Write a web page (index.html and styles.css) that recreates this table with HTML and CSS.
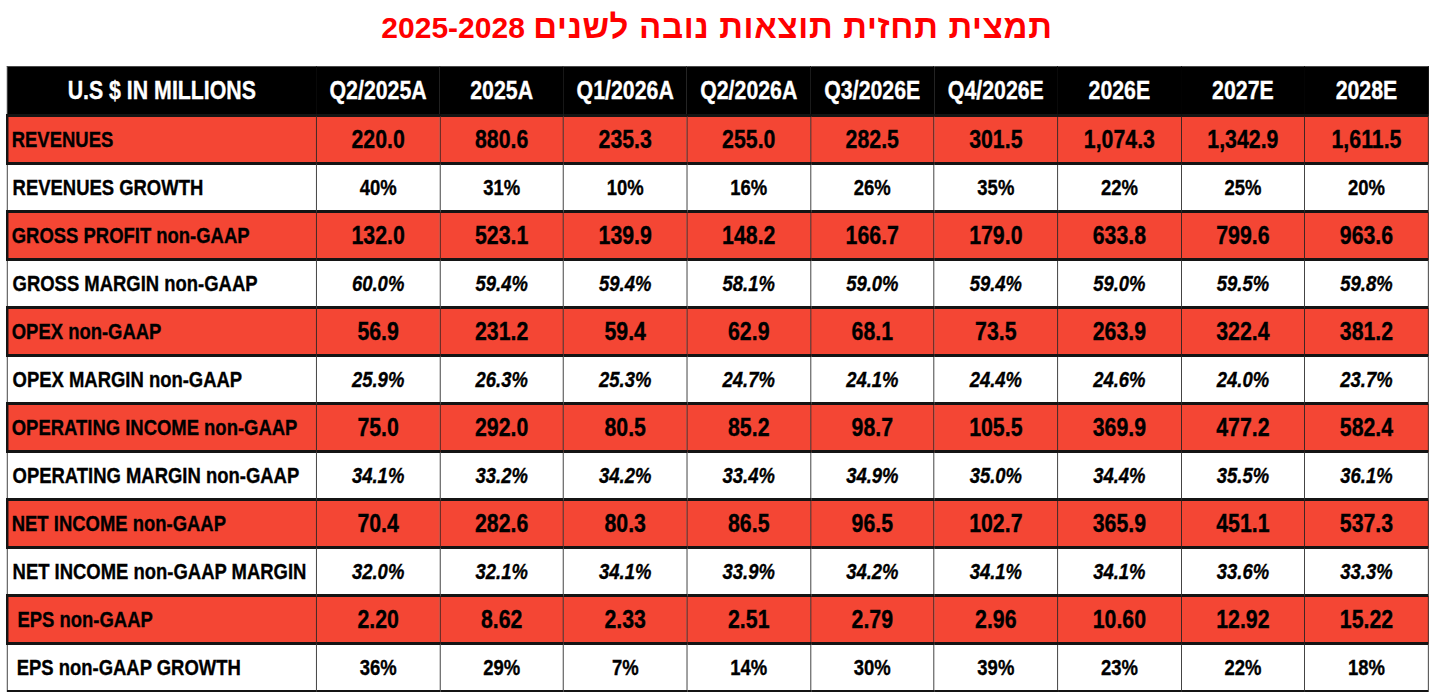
FILE: index.html
```html
<!DOCTYPE html>
<html lang="he">
<head>
<meta charset="utf-8">
<title>תמצית תחזית תוצאות נובה</title>
<link rel="stylesheet" href="styles.css">
</head>
<body>
<h1 class="title" dir="rtl"><span class="he">תמצית תחזית תוצאות נובה לשנים</span> 2025-2028</h1>
<div class="wrap">
<table class="fc">
  <colgroup>
    <col class="c-label">
    <col span="9" class="c-val">
  </colgroup>
  <thead>
    <tr>
      <th class="lbl-h">U.S $ IN MILLIONS</th>
      <th>Q2/2025A</th><th>2025A</th><th>Q1/2026A</th><th>Q2/2026A</th><th>Q3/2026E</th><th>Q4/2026E</th><th>2026E</th><th>2027E</th><th>2028E</th>
    </tr>
  </thead>
  <tbody>
    <tr class="red">
      <td class="lbl">REVENUES</td>
      <td>220.0</td><td>880.6</td><td>235.3</td><td>255.0</td><td>282.5</td><td>301.5</td><td>1,074.3</td><td>1,342.9</td><td>1,611.5</td>
    </tr>
    <tr class="white">
      <td class="lbl">REVENUES GROWTH</td>
      <td>40%</td><td>31%</td><td>10%</td><td>16%</td><td>26%</td><td>35%</td><td>22%</td><td>25%</td><td>20%</td>
    </tr>
    <tr class="red">
      <td class="lbl">GROSS PROFIT non-GAAP</td>
      <td>132.0</td><td>523.1</td><td>139.9</td><td>148.2</td><td>166.7</td><td>179.0</td><td>633.8</td><td>799.6</td><td>963.6</td>
    </tr>
    <tr class="white it">
      <td class="lbl">GROSS MARGIN non-GAAP</td>
      <td>60.0%</td><td>59.4%</td><td>59.4%</td><td>58.1%</td><td>59.0%</td><td>59.4%</td><td>59.0%</td><td>59.5%</td><td>59.8%</td>
    </tr>
    <tr class="red">
      <td class="lbl">OPEX non-GAAP</td>
      <td>56.9</td><td>231.2</td><td>59.4</td><td>62.9</td><td>68.1</td><td>73.5</td><td>263.9</td><td>322.4</td><td>381.2</td>
    </tr>
    <tr class="white it">
      <td class="lbl">OPEX MARGIN non-GAAP</td>
      <td>25.9%</td><td>26.3%</td><td>25.3%</td><td>24.7%</td><td>24.1%</td><td>24.4%</td><td>24.6%</td><td>24.0%</td><td>23.7%</td>
    </tr>
    <tr class="red">
      <td class="lbl">OPERATING INCOME non-GAAP</td>
      <td>75.0</td><td>292.0</td><td>80.5</td><td>85.2</td><td>98.7</td><td>105.5</td><td>369.9</td><td>477.2</td><td>582.4</td>
    </tr>
    <tr class="white it">
      <td class="lbl">OPERATING MARGIN non-GAAP</td>
      <td>34.1%</td><td>33.2%</td><td>34.2%</td><td>33.4%</td><td>34.9%</td><td>35.0%</td><td>34.4%</td><td>35.5%</td><td>36.1%</td>
    </tr>
    <tr class="red">
      <td class="lbl">NET INCOME non-GAAP</td>
      <td>70.4</td><td>282.6</td><td>80.3</td><td>86.5</td><td>96.5</td><td>102.7</td><td>365.9</td><td>451.1</td><td>537.3</td>
    </tr>
    <tr class="white it">
      <td class="lbl">NET INCOME non-GAAP MARGIN</td>
      <td>32.0%</td><td>32.1%</td><td>34.1%</td><td>33.9%</td><td>34.2%</td><td>34.1%</td><td>34.1%</td><td>33.6%</td><td>33.3%</td>
    </tr>
    <tr class="red">
      <td class="lbl ind">EPS non-GAAP</td>
      <td>2.20</td><td>8.62</td><td>2.33</td><td>2.51</td><td>2.79</td><td>2.96</td><td>10.60</td><td>12.92</td><td>15.22</td>
    </tr>
    <tr class="white last">
      <td class="lbl ind">EPS non-GAAP GROWTH</td>
      <td>36%</td><td>29%</td><td>7%</td><td>14%</td><td>30%</td><td>39%</td><td>23%</td><td>22%</td><td>18%</td>
    </tr>
  </tbody>
</table>
</div>
</body>
</html>
```

FILE: styles.css
```css
html, body {
  margin: 0;
  padding: 0;
  background: #ffffff;
  overflow: hidden;
}

body {
  font-family: "Liberation Sans", Arial, sans-serif;
}

.title {
  margin: 0;
  height: 57px;
  padding-top: 9px;
  box-sizing: border-box;
  font-family: "Liberation Sans", "DejaVu Sans", sans-serif;
  font-size: 30px;
  line-height: 36px;
  font-weight: bold;
  color: #ff0000;
  text-align: center;
  white-space: nowrap;
}

.title .he {
  font-size: 33px;
  letter-spacing: 0.7px;
}

.wrap {
  padding: 9px 0 0 6px;
}

/* Arial Narrow is not available: emulate the condensed face by
   laying the table out wider and compressing it horizontally. */
.fc {
  border-collapse: collapse;
  table-layout: fixed;
  width: 1735px;
  transform: scaleX(0.82);
  transform-origin: 0 0;
  font-family: "Liberation Sans", Arial, sans-serif;
  font-weight: bold;
  font-size: 22.5px;
  color: #000;
  -webkit-text-stroke: 0.35px currentColor;
}

.c-label {
  width: 377px;
}

.fc th,
.fc td {
  height: 45px;
  padding: 0;
  text-align: center;
  vertical-align: middle;
  white-space: nowrap;
  border: 1px solid #1c1c1c;
}

.fc thead th {
  height: 47px;
  background: #000;
  color: #fff;
  font-size: 26px;
  border-color: #000;
  border-top: 1px solid #4a4a4a;
}

.fc .red td {
  background: #f44634;
  font-size: 26px;
  border-top: 3px solid #141414;
  border-bottom: 3px solid #141414;
}

.fc .red td:first-child {
  border-left: 3px solid #141414;
}

.fc .white td {
  background: #fff;
}

.fc .last td {
  border-bottom: 2px solid #141414;
}

.fc td.lbl {
  font-size: 22.5px;
  text-align: left;
  padding-left: 4px;
}

.fc .white td.lbl {
  padding-left: 6px;
}

.fc td.ind,
.fc .white td.ind {
  padding-left: 11px;
}

.fc .it td:not(.lbl) {
  font-style: italic;
}
```
